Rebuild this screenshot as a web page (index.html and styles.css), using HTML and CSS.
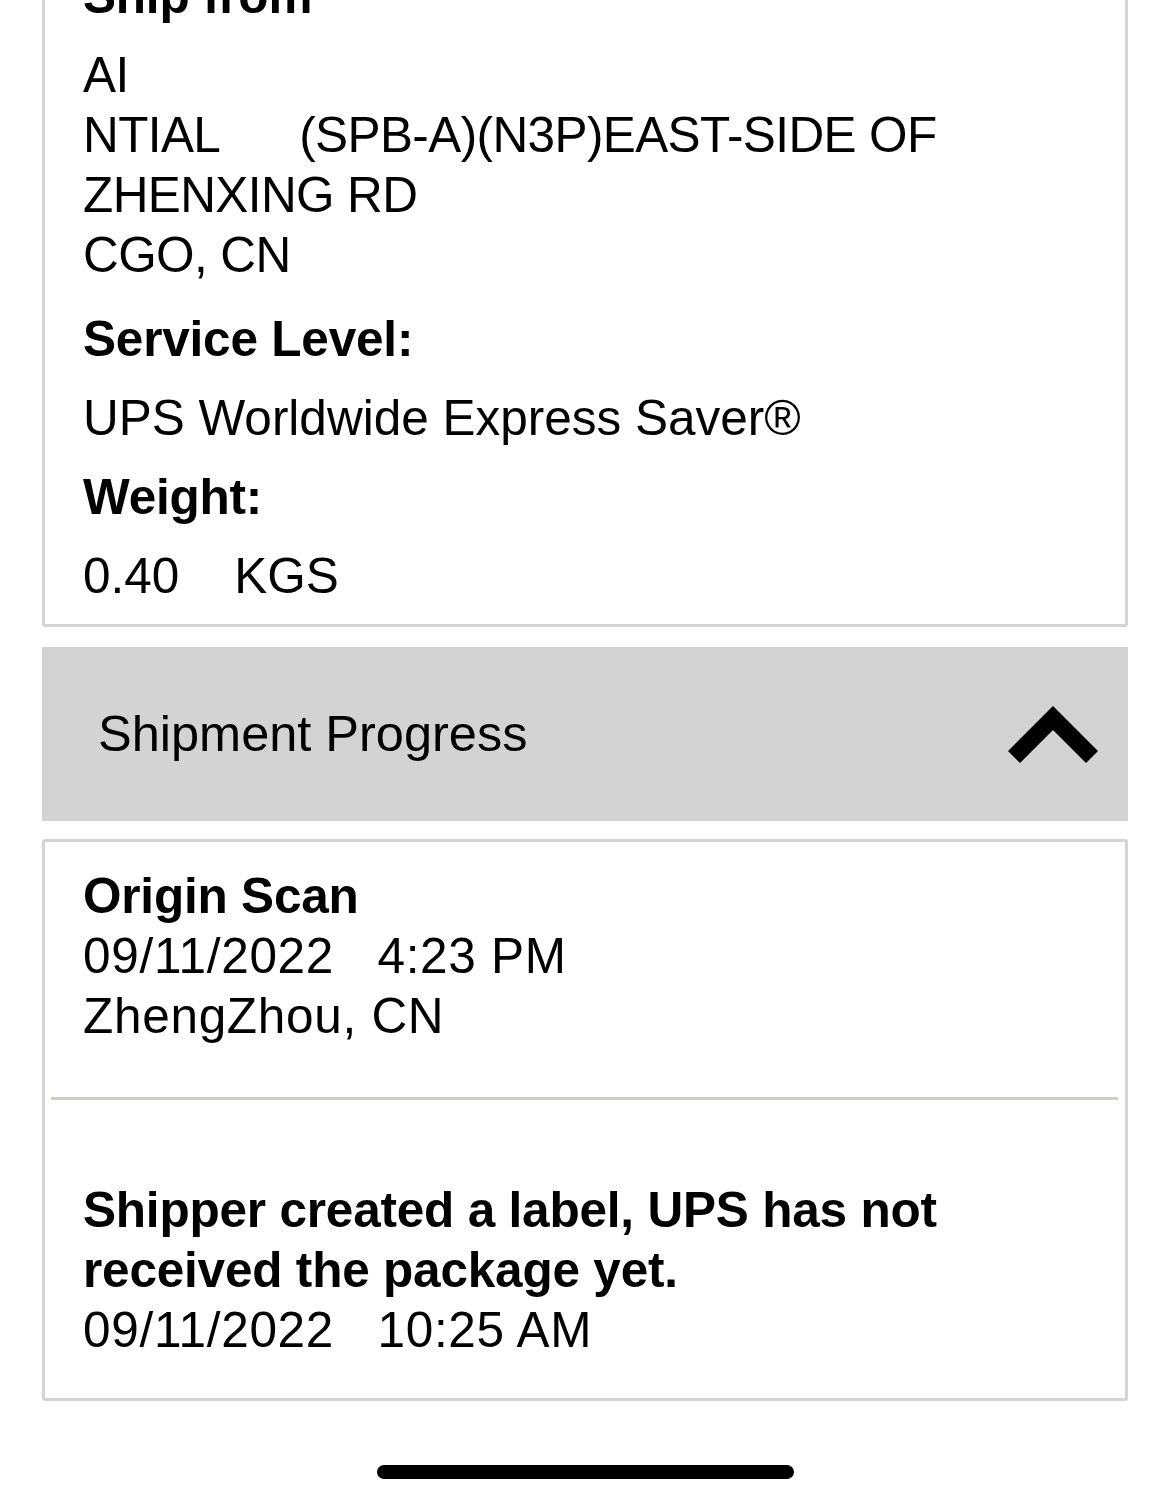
FILE: index.html
```html
<!DOCTYPE html>
<html lang="en">
<head>
<meta charset="utf-8">
<title>Shipment Details</title>
<link rel="stylesheet" href="styles.css">
</head>
<body>
<main class="screen">
  <section class="card details">
    <dl class="fields">
      <dt class="label">Ship from</dt>
      <dd class="value address">AI<br>NTIAL&nbsp;&nbsp;&nbsp;&nbsp;&nbsp; (SPB-A)(N3P)EAST-SIDE OF<br>ZHENXING RD<br>CGO, CN</dd>
      <dt class="label">Service Level:</dt>
      <dd class="value">UPS Worldwide Express Saver®</dd>
      <dt class="label">Weight:</dt>
      <dd class="value last">0.40&nbsp;&nbsp;&nbsp; KGS</dd>
    </dl>
  </section>

  <button class="accordion" type="button" aria-expanded="true">
    <span class="accordion-title">Shipment Progress</span>
    <svg class="chevron" width="90" height="57" viewBox="0 0 90 57" aria-hidden="true">
      <polyline points="6,51 45,12 84,51" fill="none" stroke="#000" stroke-width="17" stroke-linejoin="miter" stroke-linecap="butt"/>
    </svg>
  </button>

  <section class="card progress">
    <div class="event first">
      <div class="event-title">Origin Scan</div>
      <div class="event-line">09/11/2022&nbsp;&nbsp; 4:23 PM</div>
      <div class="event-line">ZhengZhou, CN</div>
    </div>
    <div class="event second">
      <div class="event-title">Shipper created a label, UPS has not received the package yet.</div>
      <div class="event-line">09/11/2022&nbsp;&nbsp; 10:25 AM</div>
    </div>
  </section>

  <div class="home-bar"><span class="home-indicator"></span></div>
</main>
</body>
</html>
```

FILE: styles.css
```css
* {
  box-sizing: border-box;
}

html, body {
  margin: 0;
  padding: 0;
  background: #ffffff;
}

body {
  font-family: "Liberation Sans", Arial, Helvetica, sans-serif;
  color: #000;
  font-size: 49.5px;
  line-height: 60px;
  overflow: hidden;
}

.screen {
  margin-top: -61px;
  padding: 0 42px;
  display: flex;
  flex-direction: column;
}

.card {
  border: 3px solid #d4d4d4;
  border-radius: 3px;
  background: #fff;
}

.details {
  padding: 24px 38px 18px 38px;
}

.fields {
  margin: 0;
}

.label {
  font-weight: bold;
  margin: 0 0 19px 0;
  letter-spacing: -0.2px;
}

.value {
  margin: 0 0 19px 0;
}

.value.address {
  margin-bottom: 24px;
  letter-spacing: -0.6px;
}

.value.last {
  margin-bottom: 0;
}

.accordion {
  margin: 20px 0 0 0;
  height: 174px;
  width: 100%;
  border: none;
  background: #d3d3d3;
  display: flex;
  align-items: center;
  justify-content: space-between;
  padding: 0 30px 0 56px;
  font-family: inherit;
  color: #000;
  font-size: 50.5px;
  line-height: 60px;
  text-align: left;
}

.accordion-title {
  font-weight: normal;
}

.chevron {
  display: block;
  flex: none;
}

.progress {
  margin-top: 18px;
  padding: 24px 7px 0 6px;
}

.event {
  padding: 0 32px;
}

.event.first {
  padding-bottom: 51px;
  border-bottom: 3px solid #d1cdc7;
}

.event.second {
  padding-top: 80px;
  padding-bottom: 38px;
}

.event-title {
  font-weight: bold;
  max-width: 880px;
  letter-spacing: -0.2px;
}

.event-line {
  letter-spacing: 0.7px;
}

.home-bar {
  display: flex;
  justify-content: center;
  padding-top: 64px;
}

.home-indicator {
  display: block;
  width: 417px;
  height: 14px;
  border-radius: 7px;
  background: #000;
}
```
